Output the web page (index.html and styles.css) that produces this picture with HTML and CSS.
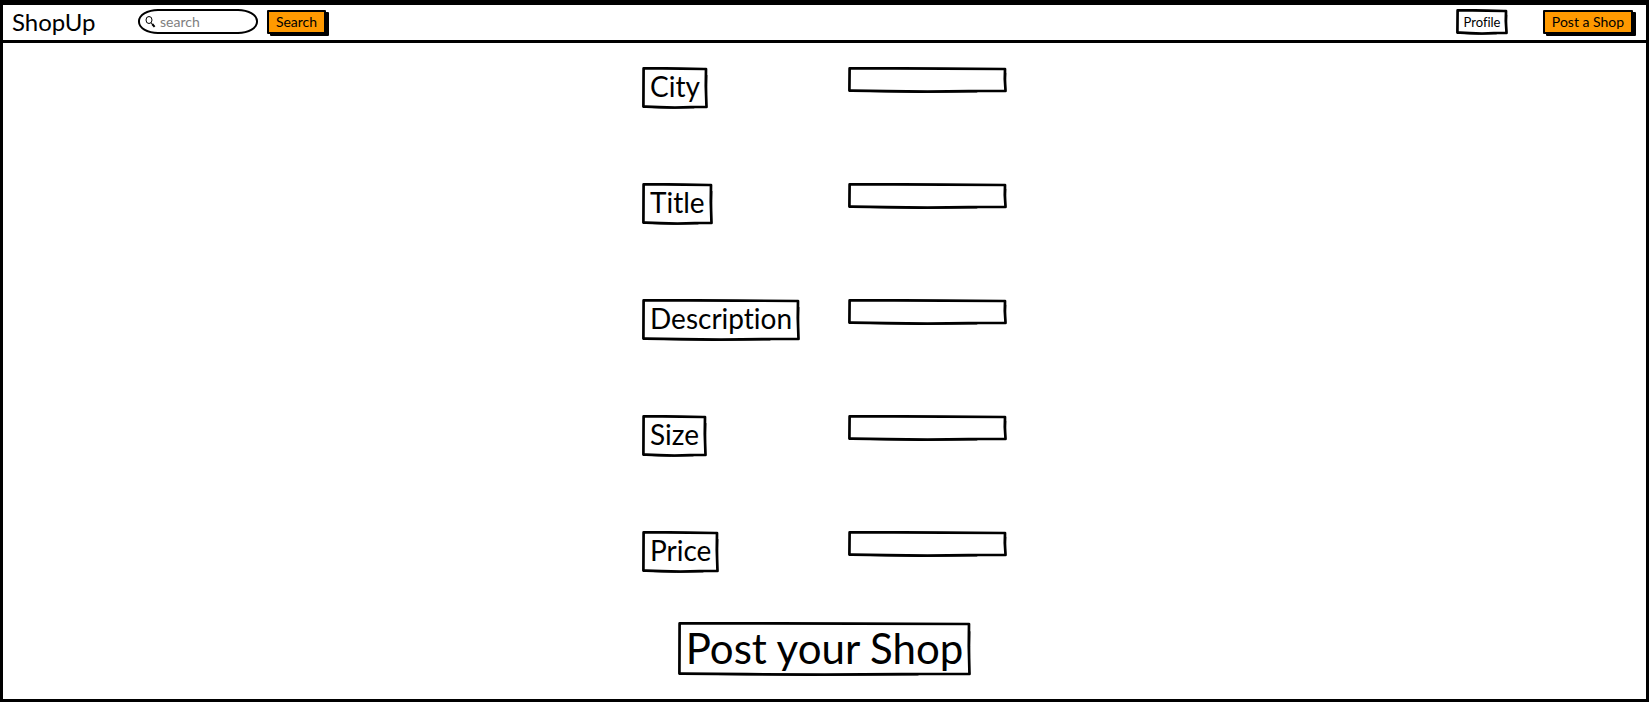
FILE: index.html
```html
<!DOCTYPE html>
<html lang="en">
<head>
<meta charset="utf-8">
<title>ShopUp</title>
<link rel="stylesheet" href="styles.css">
</head>
<body class="page">
<header class="topbar">
  <a class="brand" href="#">ShopUp</a>
  <form class="search">
    <label class="search-box">
      <svg class="search-icon" viewBox="0 0 11 12" aria-hidden="true"><ellipse cx="4" cy="4" rx="3" ry="3.5"/><path d="M5.8 6.8l1.4 1"/><path class="handle" d="M7.2 8l2.4 2.8"/></svg>
      <input class="search-input" type="text" placeholder="search" aria-label="Search shops">
    </label>
    <button class="btn btn-search" type="button">Search</button>
  </form>
  <nav class="actions">
    <button class="profile" type="button">Profile</button>
    <button class="btn btn-post" type="button">Post a Shop</button>
  </nav>
</header>
<main class="content">
  <form class="shop-form">
    <div class="row"><label class="tag" for="city">City</label><input class="field" id="city" type="text"></div>
    <div class="row"><label class="tag" for="title">Title</label><input class="field" id="title" type="text"></div>
    <div class="row"><label class="tag" for="description">Description</label><input class="field" id="description" type="text"></div>
    <div class="row"><label class="tag" for="size">Size</label><input class="field" id="size" type="text"></div>
    <div class="row"><label class="tag" for="price">Price</label><input class="field" id="price" type="text"></div>
  </form>
  <button class="submit" type="button">Post your Shop</button>
</main>
</body>
</html>
```
FILE: styles.css
```css
:root {
  --sketch: url("data:image/svg+xml,%3Csvg xmlns='http://www.w3.org/2000/svg' width='100' height='40' viewBox='0 0 100 40'%3E%3Cg fill='none' stroke='black' stroke-width='2.7' stroke-linejoin='round' stroke-linecap='round'%3E%3Cpath d='M1.6 1.4L30 1.3L60 1.6L98 2L97.8 18L98.5 38L75 38L50 38.5L25 38.2L1.4 37.6L1.5 20Z'/%3E%3Cpath stroke-width='1' d='M15 38.6L45 39.4L80 39M98.9 8L98.4 32'/%3E%3C/g%3E%3C/svg%3E");
}

* { box-sizing: border-box; }

.page {
  margin: 0;
  min-height: 100vh;
  border: 3px solid #000;
  border-top-width: 5px;
  background: #fff;
  color: #000;
  font-family: Lato, sans-serif;
  font-variant-ligatures: none;
}

button, input { font: inherit; color: inherit; }
button { cursor: pointer; }

.topbar {
  display: flex;
  align-items: center;
  height: 38px;
  padding: 0 13px 2px 9px;
  border-bottom: 3px solid #000;
}

.brand {
  width: 126px;
  color: #000;
  font-size: 24px;
  line-height: 28px;
  text-decoration: none;
}

.search, .actions { display: flex; align-items: center; }
.search { gap: 9px; }
.actions { gap: 35px; margin-left: auto; }

.search-box {
  display: flex;
  align-items: center;
  gap: 4px;
  width: 120px;
  height: 25px;
  padding: 0 16px 0 5px;
  border: 2px solid #000;
  border-radius: 20px / 12px;
}

.search-icon {
  flex: none;
  width: 11px;
  height: 12px;
  fill: none;
  stroke: #000;
  stroke-width: 1;
}
.search-icon .handle { stroke-width: 2; }

.search-input {
  width: 100%;
  min-width: 0;
  padding: 0;
  border: 0;
  outline: 0;
  background: none;
  font-size: 14px;
}
.search-input::placeholder { color: #808080; opacity: 1; }

.btn {
  height: 24px;
  padding: 0;
  border: 2px solid #000;
  border-radius: 1px;
  background: #ff9900;
  box-shadow: 3px 2px 0 #000;
  font-size: 14px;
  line-height: 18px;
}
.btn-search { width: 59px; }
.btn-post { width: 90px; }

.profile, .tag, .field, .submit {
  border: 4px solid transparent;
  border-image: var(--sketch) 4 / 4px stretch;
  background: none;
}

.profile {
  width: 52px;
  height: 26px;
  padding: 0;
  font-size: 13px;
  line-height: 18px;
}

.content {
  display: flex;
  flex-direction: column;
  align-items: center;
  gap: 49px;
  padding: 24px 0 20px;
}

.shop-form { display: grid; gap: 74px; }

.row {
  display: grid;
  grid-template-columns: 206px 159px;
  align-items: start;
  justify-items: start;
}

.tag {
  height: 42px;
  padding: 0 4px;
  font-size: 28px;
  line-height: 30px;
}

.field {
  width: 100%;
  height: 26px;
  padding: 0 4px;
  outline: 0;
  font-size: 14px;
}

.submit {
  height: 54px;
  padding: 0 4px 2px;
  font-size: 42px;
  line-height: 42px;
}
```
